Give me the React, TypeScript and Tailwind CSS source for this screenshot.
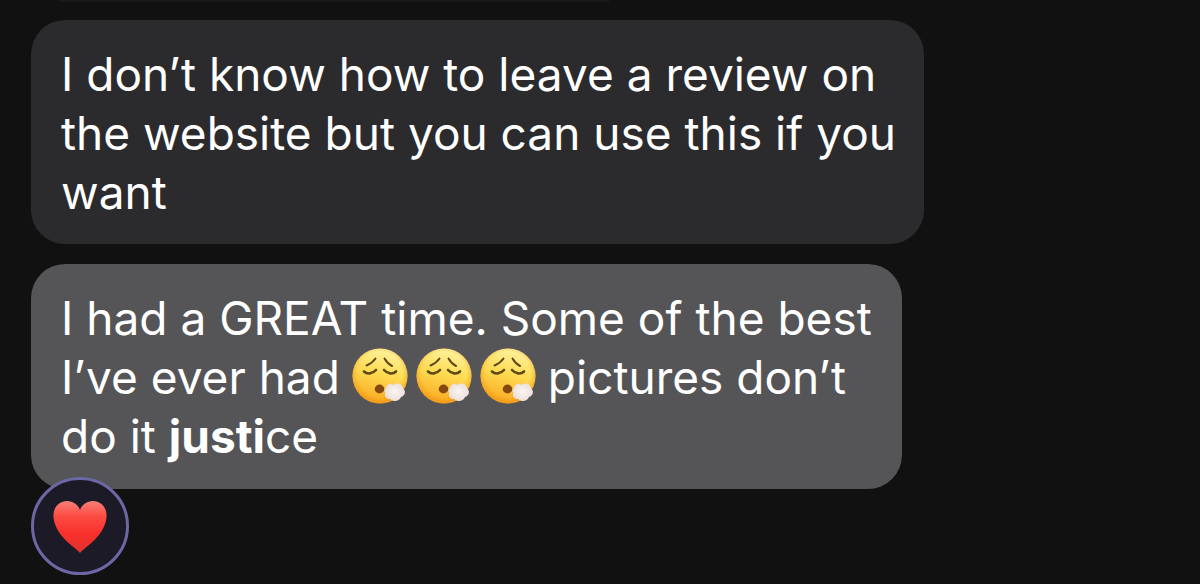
import React from 'react'

function SighFace() {
  return (
    <svg
      className="h-14 w-14 shrink-0"
      viewBox="0 0 56 56"
      role="img"
      aria-label="face exhaling"
    >
      <defs>
        <linearGradient id="skin" x1="0.6" y1="0" x2="0.35" y2="1">
          <stop offset="0" stopColor="#fff3a0" />
          <stop offset="0.45" stopColor="#fedb52" />
          <stop offset="1" stopColor="#f8a81e" />
        </linearGradient>
        <radialGradient id="edge" cx="0.5" cy="0.46" r="0.54">
          <stop offset="0.75" stopColor="#f29a16" stopOpacity="0" />
          <stop offset="1" stopColor="#e98a12" stopOpacity="0.6" />
        </radialGradient>
        <radialGradient id="puff" cx="0.5" cy="0.45" r="0.6">
          <stop offset="0" stopColor="#fbf5f2" />
          <stop offset="1" stopColor="#e8dcd8" />
        </radialGradient>
      </defs>
      <circle cx="28" cy="28" r="27.5" fill="url(#skin)" />
      <circle cx="28" cy="28" r="27.5" fill="url(#edge)" />
      <g fill="none" stroke="#5c4a18" strokeLinecap="round">
        <path d="M14.5 17.5c4-1.500 7-4 9-7" strokeWidth="2" />
        <path d="M32.500 10.500c2 3.500 4.500 6 7.500 7.500" strokeWidth="2" />
        <path d="M12 23.500c3 3 8.500 2.500 12-1.500" strokeWidth="2.600" />
        <path d="M32 22c3.500 4 9 4.500 12 1.500" strokeWidth="2.600" />
      </g>
      <ellipse cx="27.500" cy="41" rx="4.800" ry="4.400" fill="#85490f" />
      <path
        d="M34 40c0-3.500 4.500-5 7.500-3 3-3 9.500-1 9.500 3.500 3.500 2.500 2 7.500-2 8.500-1.500 4.500-8 5.500-10.500 2-4 .5-6.500-3-5-6-1.500-1-1.500-3.500.5-5z"
        fill="url(#puff)"
      />
    </svg>
  )
}

function Heart() {
  return (
    <svg className="h-14 w-14" viewBox="0 0 56 56" aria-hidden="true">
      <defs>
        <linearGradient id="heart" x1="0" y1="0" x2="0" y2="1">
          <stop offset="0" stopColor="#fa8078" />
          <stop offset="0.3" stopColor="#fb4a42" />
          <stop offset="0.65" stopColor="#f92f2b" />
          <stop offset="1" stopColor="#dc3430" />
        </linearGradient>
      </defs>
      <path
        d="M28 55C23 49 3 38 1.500 19 .8 9.500 7 3 15 3c6 0 11 3.500 13 9 2-5.500 7-9 13-9 8 0 14.200 6.500 13.500 16C53 38 33 49 28 55z"
        fill="url(#heart)"
      />
    </svg>
  )
}

export default function App() {
  return (
    <main className="min-h-screen bg-[#111111] px-[31px] font-['Inter',sans-serif] text-[46px] leading-[59px] font-normal text-white">
      <div className="mx-7 h-0.5 max-w-[550px] bg-[#1a1a1b]"></div>
      <div className="flex flex-col items-start gap-5 pt-[18px]">
        <p className="w-full max-w-[893px] rounded-[34px] bg-[#2b2b2d] pr-5 pl-[30px] pt-[25px] pb-[22px]">
          I don’t know how to leave a review on
          <br />
          the website but you can use this if you
          <br />
          want
        </p>
        <div className="relative w-full max-w-[871px] rounded-[34px] bg-[#555557] pr-5 pl-[30px] pt-[25px] pb-[23px]">
          <p>I had a GREAT time. Some of the best</p>
          <p className="flex flex-wrap items-start">
            <span>I’ve ever had</span>
            <span className="mx-3 flex gap-2">
              <SighFace />
              <SighFace />
              <SighFace />
            </span>
            <span>pictures don’t</span>
          </p>
          <p>
            do it <b className="font-bold">justi</b>ce
          </p>
          <button
            type="button"
            aria-label="Loved"
            className="absolute top-full left-0 -mt-3 flex h-[98px] w-[98px] items-center justify-center rounded-full border-3 border-[#6c67a5] bg-[#1c1a26]"
          >
            <Heart />
          </button>
        </div>
      </div>
    </main>
  )
}
